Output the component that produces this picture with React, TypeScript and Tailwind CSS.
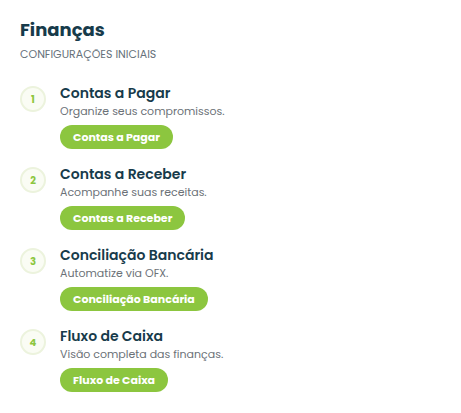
const steps = [
  { n: 1, title: 'Contas a Pagar', desc: 'Organize seus compromissos.', action: 'Contas a Pagar' },
  { n: 2, title: 'Contas a Receber', desc: 'Acompanhe suas receitas.', action: 'Contas a Receber' },
  { n: 3, title: 'Conciliação Bancária', desc: 'Automatize via OFX.', action: 'Conciliação Bancária' },
  { n: 4, title: 'Fluxo de Caixa', desc: 'Visão completa das finanças.', action: 'Fluxo de Caixa' },
];

export default function App() {
  return (
    <div className="min-h-screen bg-white px-5 pt-4 font-['Poppins','Open_Sans',sans-serif]">
      <h1 className="text-[18px] font-bold leading-[28px] text-[#173b4b]">Finanças</h1>
      <p className="mt-[3px] text-[11px] leading-[14px] text-[#66717a]">CONFIGURAÇÕES INICIAIS</p>

      <ul className="mt-[23px] flex flex-col gap-4">
        {steps.map((s) => (
          <li key={s.n} className="flex gap-[14px]">
            <div className="mt-[2px] flex h-[26px] w-[26px] shrink-0 items-center justify-center rounded-full border-2 border-[#ecf3dd] bg-[#fafcf4] text-[10px] font-bold text-[#8cc63f]">
              {s.n}
            </div>
            <div className="flex flex-col items-start">
              <h3 className="text-[14px] font-semibold leading-[18px] text-[#173b4b]">{s.title}</h3>
              <p className="mt-px text-[11px] leading-[16px] text-[#6b7177]">{s.desc}</p>
              <button className="mt-[6px] h-[24px] rounded-full bg-[#8cc63f] px-[13px] text-[11px] font-bold text-white">
                {s.action}
              </button>
            </div>
          </li>
        ))}
      </ul>
    </div>
  );
}
